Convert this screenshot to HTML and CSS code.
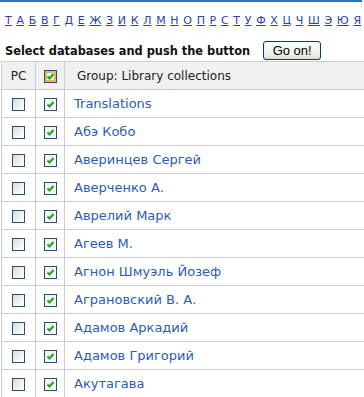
FILE: index.html
```html
<!DOCTYPE html>
<html lang="en">
<head>
    <meta charset="UTF-8">
    <title>Library collections</title>
    <link rel="stylesheet" href="styles.css">
</head>
<body>

    <div class="topline"></div>

    <div class="letters">
        <a href="#" class="visited">T</a>
        <a href="#">А</a>
        <a href="#">Б</a>
        <a href="#">В</a>
        <a href="#">Г</a>
        <a href="#">Д</a>
        <a href="#">Е</a>
        <a href="#">Ж</a>
        <a href="#">З</a>
        <a href="#">И</a>
        <a href="#">К</a>
        <a href="#">Л</a>
        <a href="#">М</a>
        <a href="#">Н</a>
        <a href="#">О</a>
        <a href="#">П</a>
        <a href="#">Р</a>
        <a href="#">С</a>
        <a href="#">Т</a>
        <a href="#">У</a>
        <a href="#">Ф</a>
        <a href="#">Х</a>
        <a href="#">Ц</a>
        <a href="#">Ч</a>
        <a href="#">Ш</a>
        <a href="#">Э</a>
        <a href="#">Ю</a>
        <a href="#">Я</a>
    </div>

    <div class="select">
        <b>Select databases and push the button</b>
        <button>Go on!</button>
    </div>

    <table class="dbs">
        <tr class="head">
            <td class="c1">PC</td>
            <td class="c2"><span class="box checked hover"></span></td>
            <td class="c3">Group: Library collections</td>
        </tr>
        <tr>
            <td class="c1"><span class="box"></span></td>
            <td class="c2"><span class="box checked"></span></td>
            <td class="c3"><a href="#">Translations</a></td>
        </tr>
        <tr>
            <td class="c1"><span class="box"></span></td>
            <td class="c2"><span class="box checked"></span></td>
            <td class="c3"><a href="#">Абэ Кобо</a></td>
        </tr>
        <tr>
            <td class="c1"><span class="box"></span></td>
            <td class="c2"><span class="box checked"></span></td>
            <td class="c3"><a href="#">Аверинцев Сергей</a></td>
        </tr>
        <tr>
            <td class="c1"><span class="box"></span></td>
            <td class="c2"><span class="box checked"></span></td>
            <td class="c3"><a href="#">Аверченко А.</a></td>
        </tr>
        <tr>
            <td class="c1"><span class="box"></span></td>
            <td class="c2"><span class="box checked"></span></td>
            <td class="c3"><a href="#">Аврелий Марк</a></td>
        </tr>
        <tr>
            <td class="c1"><span class="box"></span></td>
            <td class="c2"><span class="box checked"></span></td>
            <td class="c3"><a href="#">Агеев М.</a></td>
        </tr>
        <tr>
            <td class="c1"><span class="box"></span></td>
            <td class="c2"><span class="box checked"></span></td>
            <td class="c3"><a href="#">Агнон Шмуэль Йозеф</a></td>
        </tr>
        <tr>
            <td class="c1"><span class="box"></span></td>
            <td class="c2"><span class="box checked"></span></td>
            <td class="c3"><a href="#">Аграновский В. А.</a></td>
        </tr>
        <tr>
            <td class="c1"><span class="box"></span></td>
            <td class="c2"><span class="box checked"></span></td>
            <td class="c3"><a href="#">Адамов Аркадий</a></td>
        </tr>
        <tr>
            <td class="c1"><span class="box"></span></td>
            <td class="c2"><span class="box checked"></span></td>
            <td class="c3"><a href="#">Адамов Григорий</a></td>
        </tr>
        <tr>
            <td class="c1"><span class="box"></span></td>
            <td class="c2"><span class="box checked"></span></td>
            <td class="c3"><a href="#">Акутагава</a></td>
        </tr>
    </table>

</body>
</html>
```

FILE: styles.css
```css
body{
    margin: 0px;
    font-family: 'DejaVu Sans', Verdana, sans-serif;
    background: white;
    overflow: hidden;
}

.topline{
    width: 362px;
    height: 2px;
    background: #2a72c8;
}

.letters{
    display: flex;
    gap: 4.7px;
    padding-left: 5px;
    margin-top: 12px;
    font-size: 11px;
    line-height: 13px;
}
.letters a{
    color: #2b3fb3;
}
.letters a.visited{
    color: #5a2d91;
}

.select{
    display: flex;
    align-items: center;
    padding-left: 5px;
    margin-top: 13px;
    height: 21px;
}
.select b{
    font-size: 11.4px;
    color: #111;
}
button{
    margin-left: 13px;
    width: 58px;
    height: 19px;
    padding: 0;
    border: 1px solid #003c74;
    border-radius: 3px;
    background: linear-gradient(#ffffff, #f0f0ea 70%, #dcdcd2);
    font-family: 'Liberation Sans', Arial, sans-serif;
    font-size: 13px;
    color: #000;
}

.dbs{
    border-collapse: collapse;
    margin-left: 1px;
    width: 370px;
}
.dbs td{
    border: 1px solid #cccccc;
    height: 27px;
    padding: 0;
    font-size: 12px;
}
.dbs .c1{
    width: 33px;
    text-align: center;
}
.dbs .c2{
    width: 28px;
    text-align: center;
}
.dbs .c3{
    padding-left: 9px;
}
.dbs .head td{
    background: #f1f1f1;
    color: #222;
}
.dbs .head .c3{
    padding-left: 12px;
}
.dbs a{
    color: #2c5cb4;
    text-decoration: none;
    font-size: 13px;
}

.box{
    display: inline-block;
    vertical-align: middle;
    width: 11px;
    height: 11px;
    border: 1px solid #1c5180;
    background: linear-gradient(135deg, #dcdcd5, #f6f6f3 70%, #ffffff);
}
.box.checked{
    background: #f4f4f0 url("data:image/svg+xml,%3Csvg xmlns='http://www.w3.org/2000/svg' width='11' height='11'%3E%3Cpath d='M2.5 5.5l2 2 4-4.5' fill='none' stroke='%2321a121' stroke-width='2'/%3E%3C/svg%3E") no-repeat center;
}
.box.hover{
    box-shadow: inset 0 0 0 2px #f8b33e;
}
```
